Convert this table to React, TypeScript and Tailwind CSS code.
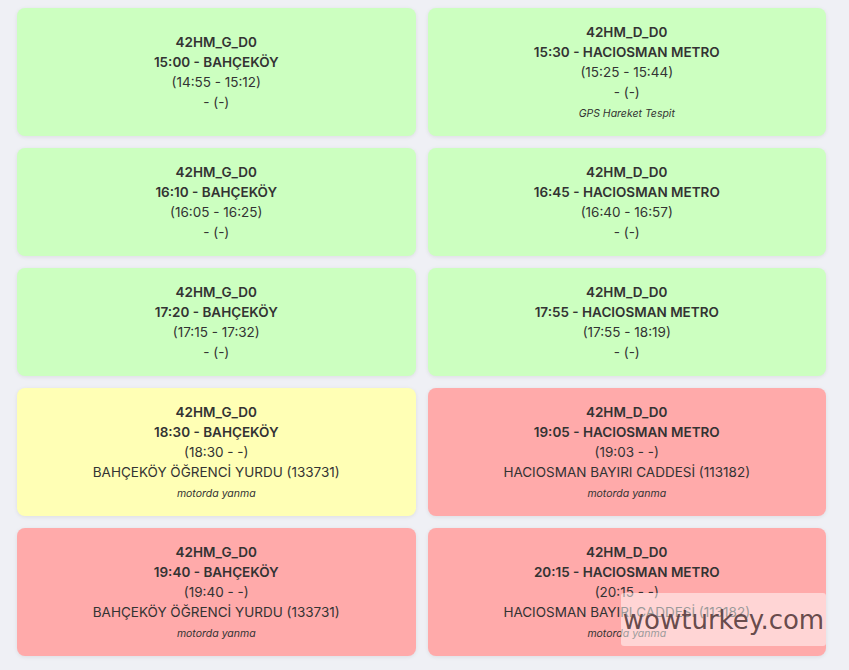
import React from "react";

type Card = {
  code: string;
  title: string;
  range: string;
  stop: string;
  note?: string;
  color: "green" | "yellow" | "red";
};

const cards: Card[] = [
  { code: "42HM_G_D0", title: "15:00 - BAHÇEKÖY", range: "(14:55 - 15:12)", stop: "- (-)", color: "green" },
  { code: "42HM_D_D0", title: "15:30 - HACIOSMAN METRO", range: "(15:25 - 15:44)", stop: "- (-)", note: "GPS Hareket Tespit", color: "green" },
  { code: "42HM_G_D0", title: "16:10 - BAHÇEKÖY", range: "(16:05 - 16:25)", stop: "- (-)", color: "green" },
  { code: "42HM_D_D0", title: "16:45 - HACIOSMAN METRO", range: "(16:40 - 16:57)", stop: "- (-)", color: "green" },
  { code: "42HM_G_D0", title: "17:20 - BAHÇEKÖY", range: "(17:15 - 17:32)", stop: "- (-)", color: "green" },
  { code: "42HM_D_D0", title: "17:55 - HACIOSMAN METRO", range: "(17:55 - 18:19)", stop: "- (-)", color: "green" },
  { code: "42HM_G_D0", title: "18:30 - BAHÇEKÖY", range: "(18:30 - -)", stop: "BAHÇEKÖY ÖĞRENCİ YURDU (133731)", note: "motorda yanma", color: "yellow" },
  { code: "42HM_D_D0", title: "19:05 - HACIOSMAN METRO", range: "(19:03 - -)", stop: "HACIOSMAN BAYIRI CADDESİ (113182)", note: "motorda yanma", color: "red" },
  { code: "42HM_G_D0", title: "19:40 - BAHÇEKÖY", range: "(19:40 - -)", stop: "BAHÇEKÖY ÖĞRENCİ YURDU (133731)", note: "motorda yanma", color: "red" },
  { code: "42HM_D_D0", title: "20:15 - HACIOSMAN METRO", range: "(20:15 - -)", stop: "HACIOSMAN BAYIRI CADDESİ (113182)", note: "motorda yanma", color: "red" },
];

const bg: Record<Card["color"], string> = {
  green: "bg-[#ccffc0]",
  yellow: "bg-[#ffffb5]",
  red: "bg-[#ffaaaa]",
};

export default function App() {
  return (
    <div
      className="relative min-h-[670px] w-[849px] bg-[#eff0f5] pl-[17px] pr-[23px] pt-[8px] text-[#333333]"
      style={{ fontFamily: "Inter, 'Noto Sans', sans-serif" }}
    >
      <div className="grid grid-cols-2 gap-x-[12px] gap-y-[12px]">
        {cards.map((c, i) => (
          <div
            key={i}
            className={`${bg[c.color]} flex flex-col items-center justify-center rounded-lg px-3 py-[14px] text-center text-[13.5px] leading-[20px] shadow-[0_1px_4px_rgba(0,0,0,0.08)]`}
          >
            <div className="font-semibold">{c.code}</div>
            <div className="font-semibold">{c.title}</div>
            <div>{c.range}</div>
            <div>{c.stop}</div>
            {c.note && (
              <div className="mt-[4px] text-[10.5px] italic leading-[16px]">{c.note}</div>
            )}
          </div>
        ))}
      </div>
      <div className="absolute left-[621px] top-[593px] flex h-[53px] w-[205px] items-center justify-center rounded-[3px] bg-[rgba(255,255,255,0.5)]">
        <span
          className="text-[26px] leading-none text-[#54393a]/90"
          style={{ fontFamily: "'DejaVu Sans', sans-serif" }}
        >
          wowturkey.com
        </span>
      </div>
    </div>
  );
}
